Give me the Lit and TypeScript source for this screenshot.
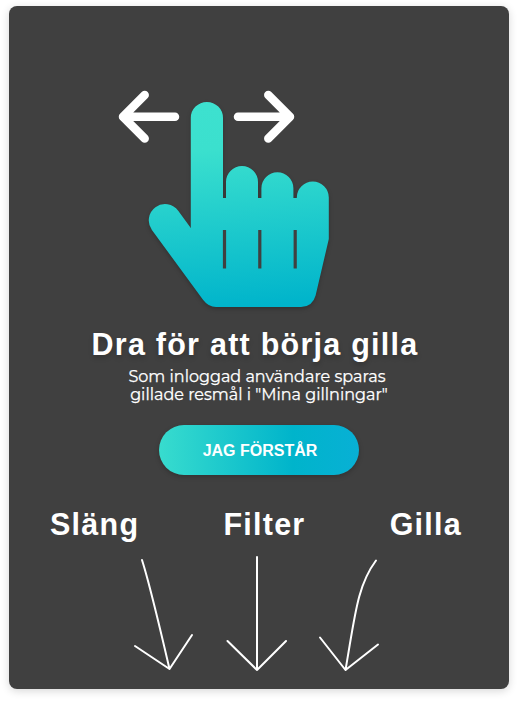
import { LitElement, html, css } from "lit";
import { customElement } from "lit/decorators.js";

@customElement("app-root")
export class AppRoot extends LitElement {
  static styles = css`
    :host {
      display: block;
      box-sizing: border-box;
      height: 701px;
      padding: 6px 9px 12px;
      background: #fff;
      overflow: hidden;
      font-family: "Liberation Sans", Arial, sans-serif;
      color: #fff;
    }
    .card {
      box-sizing: border-box;
      width: 500px;
      height: 683px;
      border-radius: 8px;
      background: #404040;
      box-shadow: 0 2px 8px rgba(0, 0, 0, 0.16);
      display: flex;
      flex-direction: column;
      align-items: center;
    }
    .swipe {
      display: block;
      width: 500px;
      height: 321px;
      flex: none;
    }
    .hand {
      filter: drop-shadow(0 2px 2px rgba(0, 0, 0, 0.22));
    }
    .title {
      margin: 0;
      height: 36px;
      line-height: 34px;
      font-size: 30.5px;
      font-weight: 700;
      letter-spacing: 1.25px;
      white-space: nowrap;
      text-shadow: 0 3px 5px rgba(0, 0, 0, 0.2);
      padding-right: 8px;
    }
    .note {
      margin: 5px 0 0;
      line-height: 18px;
      font-family: Montserrat, Inter, sans-serif;
      font-size: 16px;
      -webkit-text-stroke: 0.25px #fff;
      text-align: center;
      white-space: nowrap;
    }
    .line {
      display: block;
    }
    .line.first {
      padding-right: 4px;
    }
    .accept {
      margin: 21px 0 0;
      width: 200px;
      height: 50px;
      padding: 2px 0 0 2px;
      border: 0;
      border-radius: 25px;
      background: linear-gradient(to right, #38dcce 0%, #00b4cb 67%, #08b0d5 100%);
      box-shadow: 0 2px 5px rgba(0, 0, 0, 0.22);
      font: 700 16px "Liberation Sans", Arial, sans-serif;
      color: #fff;
    }
    .labels {
      box-sizing: border-box;
      width: 500px;
      height: 36px;
      margin-top: 32px;
      padding: 0 47px 0 41px;
      display: flex;
      justify-content: space-between;
      line-height: 34px;
      font-size: 30.5px;
      font-weight: 700;
      letter-spacing: 1.25px;
    }
    .pointers {
      display: block;
      width: 500px;
      height: 130px;
      margin-top: 9px;
      fill: none;
      stroke: #fff;
      stroke-width: 2;
      stroke-linecap: round;
      stroke-linejoin: round;
    }
    .arrow {
      fill: none;
      stroke: #fff;
      stroke-width: 8.5;
      stroke-linecap: round;
      stroke-linejoin: round;
    }
  `;

  render() {
    return html`
      <section class="card">
        <svg class="swipe" viewBox="9 6 500 321">
          <defs>
            <linearGradient id="teal" gradientUnits="userSpaceOnUse" x1="230" y1="102" x2="247" y2="307">
              <stop offset="0" stop-color="#3de1cf" />
              <stop offset="0.22" stop-color="#3be0ce" />
              <stop offset="1" stop-color="#00b4cb" />
            </linearGradient>
          </defs>
          <path class="arrow" d="M175 116.7H123.3M144.7 95.1L123 116.7L144.7 138.6" />
          <path class="arrow" d="M238 116.7H290M268.3 95.1L290 116.7L268.3 138.6" />
          <path
            class="hand"
            fill="url(#teal)"
            d="M190.8 228V118a16.1 16.1 0 0 1 32.2 0V198H226V182a16 16 0 0 1 32 0V198H261.4V188.3a16 16 0 0 1 32 0V198H296.8V197.6A16 16 0 0 1 328.8 197.6V239L315.6 295.5Q312.5 306.8 301 307H216Q208.5 307 203.2 300L151.9 230A16 16 0 0 1 178.2 210.8Z"
          />
          <path fill="#404040" d="M222.9 230h3.2v38.6h-3.2zM258.2 230h3.2v38.6h-3.2zM293.6 230h3.2v38.6h-3.2z" />
        </svg>
        <h1 class="title">Dra för att börja gilla</h1>
        <p class="note">
          <span class="line first">Som inloggad användare sparas</span>
          <span class="line">gillade resmål i "Mina gillningar"</span>
        </p>
        <button class="accept">JAG FÖRSTÅR</button>
        <div class="labels"><span>Släng</span><span>Filter</span><span>Gilla</span></div>
        <svg class="pointers" viewBox="9 552 500 130">
          <path d="M142 560Q150 585 169.5 669M135 646L169.5 669L192 635" />
          <path d="M257 557V670M227.5 641L257 670L286 641" />
          <path d="M376 560.5C357 586 355 616 345.5 670M320 637.5L345.5 670L378 644.5" />
        </svg>
      </section>
    `;
  }
}
